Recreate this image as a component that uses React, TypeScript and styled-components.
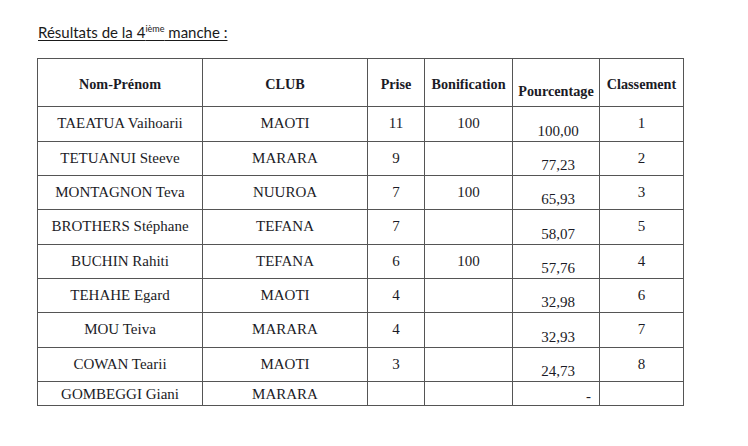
import React from "react";
import styled, { createGlobalStyle } from "styled-components";

const Global = createGlobalStyle`
  html, body { margin: 0; padding: 0; background: #ffffff; }
  body { width: 748px; height: 446px; overflow: hidden; }
`;

const Page = styled.div`
  padding: 22px 0 0 37px;
  display: flex;
  flex-direction: column;
  gap: 16px;
`;

const Title = styled.h1`
  margin: 0 0 0 1px;
  font-family: Lato, "Open Sans", sans-serif;
  font-weight: 400;
  font-size: 15px;
  line-height: 20px;
  color: #1a1a1a;
  text-decoration: underline;
  text-underline-offset: 2px;
  text-decoration-thickness: 1px;
`;

const Sup = styled.sup`
  font-size: 9px;
  vertical-align: 6px;
  line-height: 0;
`;

const Table = styled.table`
  border-collapse: collapse;
  table-layout: fixed;
  width: 646px;
  font-family: "Liberation Serif", "Times New Roman", serif;
  font-size: 15px;
  color: #1b1b26;
`;

const HeadRow = styled.tr`
  height: 48px;
`;

const Row = styled.tr<{ $h: number }>`
  height: ${(p) => p.$h}px;
`;

const Th = styled.th<{ $low?: boolean }>`
  border: 1.5px solid #555;
  font-family: "Liberation Serif", "Times New Roman", serif;
  font-weight: 700;
  font-size: 14.2px;
  color: #1b1b26;
  text-align: center;
  vertical-align: ${(p) => (p.$low ? "bottom" : "middle")};
  padding: ${(p) => (p.$low ? "0 0 6px" : "3px 0 0")};
  white-space: nowrap;
`;

const Td = styled.td<{ $low?: boolean }>`
  border: 1.5px solid #555;
  font-family: "Liberation Serif", "Times New Roman", serif;
  font-size: 15px;
  color: #1b1b26;
  text-align: center;
  vertical-align: ${(p) => (p.$low ? "bottom" : "top")};
  padding: ${(p) => (p.$low ? "0 0 1px 4px" : "8px 0 0")};
  line-height: 17px;
  white-space: nowrap;
`;

type R = {
  name: string;
  club: string;
  prise: string;
  bonif: string;
  pct: string;
  rank: string;
  h: number;
};

const rows: R[] = [
  { name: "TAEATUA Vaihoarii", club: "MAOTI", prise: "11", bonif: "100", pct: "100,00", rank: "1", h: 35 },
  { name: "TETUANUI Steeve", club: "MARARA", prise: "9", bonif: "", pct: "77,23", rank: "2", h: 34 },
  { name: "MONTAGNON Teva", club: "NUUROA", prise: "7", bonif: "100", pct: "65,93", rank: "3", h: 34 },
  { name: "BROTHERS Stéphane", club: "TEFANA", prise: "7", bonif: "", pct: "58,07", rank: "5", h: 35 },
  { name: "BUCHIN Rahiti", club: "TEFANA", prise: "6", bonif: "100", pct: "57,76", rank: "4", h: 34 },
  { name: "TEHAHE Egard", club: "MAOTI", prise: "4", bonif: "", pct: "32,98", rank: "6", h: 34 },
  { name: "MOU Teiva", club: "MARARA", prise: "4", bonif: "", pct: "32,93", rank: "7", h: 35 },
  { name: "COWAN Tearii", club: "MAOTI", prise: "3", bonif: "", pct: "24,73", rank: "8", h: 34 },
];

const LastTd = styled(Td)`
  vertical-align: middle;
  padding: 1px 0 0;
`;

const DashTd = styled(Td)`
  vertical-align: bottom;
  text-align: right;
  padding: 0 8px 0 0;
`;

export default function App() {
  return (
    <>
      <Global />
      <Page>
        <Title>
          Résultats de la 4<Sup>ième</Sup> manche :
        </Title>
        <Table>
          <colgroup>
            <col style={{ width: 165 }} />
            <col style={{ width: 165 }} />
            <col style={{ width: 57 }} />
            <col style={{ width: 88 }} />
            <col style={{ width: 87 }} />
            <col style={{ width: 84 }} />
          </colgroup>
          <thead>
            <HeadRow>
              <Th>Nom-Prénom</Th>
              <Th>CLUB</Th>
              <Th>Prise</Th>
              <Th>Bonification</Th>
              <Th $low>Pourcentage</Th>
              <Th>Classement</Th>
            </HeadRow>
          </thead>
          <tbody>
            {rows.map((r) => (
              <Row key={r.name} $h={r.h}>
                <Td>{r.name}</Td>
                <Td>{r.club}</Td>
                <Td>{r.prise}</Td>
                <Td>{r.bonif}</Td>
                <Td $low>{r.pct}</Td>
                <Td>{r.rank}</Td>
              </Row>
            ))}
            <Row $h={24}>
              <LastTd>GOMBEGGI Giani</LastTd>
              <LastTd>MARARA</LastTd>
              <LastTd />
              <LastTd />
              <DashTd>-</DashTd>
              <LastTd />
            </Row>
          </tbody>
        </Table>
      </Page>
    </>
  );
}
